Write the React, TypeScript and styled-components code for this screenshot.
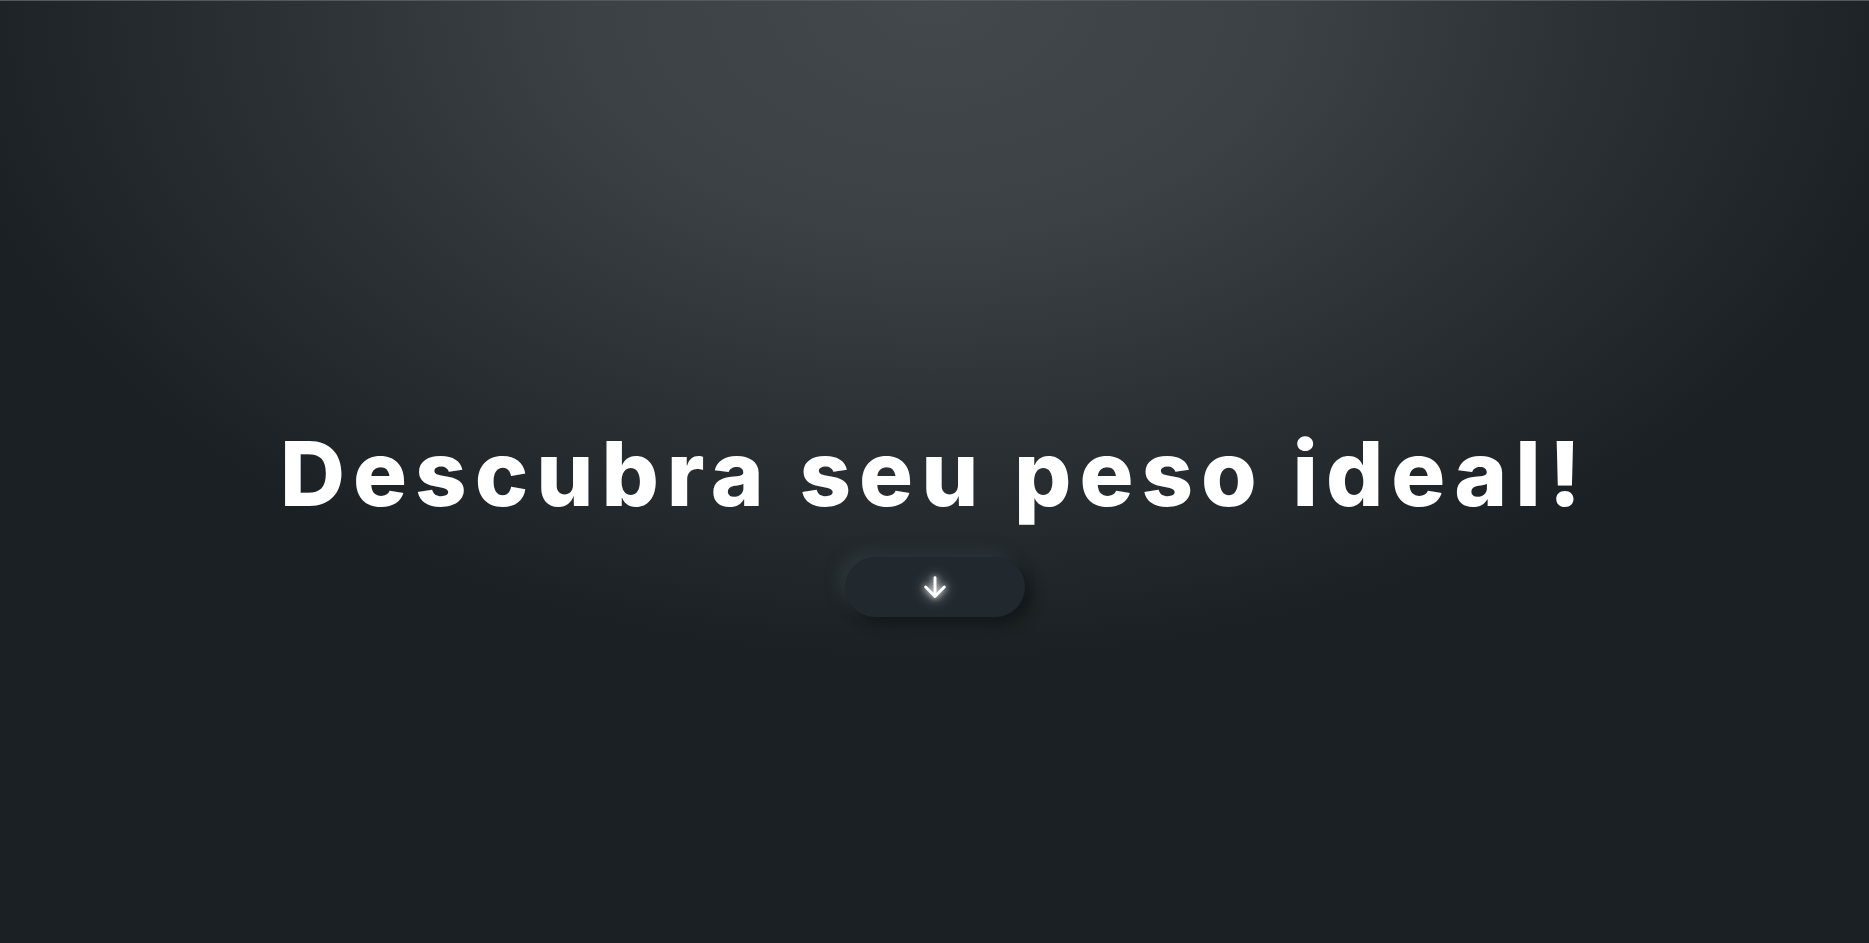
import React from "react";
import styled, { createGlobalStyle } from "styled-components";
import { ArrowDown } from "lucide-react";

const GlobalStyle = createGlobalStyle`
  * { box-sizing: border-box; }
  html, body { margin: 0; padding: 0; height: 100%; }
  body {
    background: #1a2023;
    font-family: "Inter", "Liberation Sans", sans-serif;
  }
`;

const Hero = styled.section`
  height: 100vh;
  border-top: 1px solid #55595d;
  background:
    radial-gradient(
      ellipse 1000px 660px at 50% 0%,
      #43484c 0%,
      #3c4145 35%,
      #2b3135 65%,
      #1a2023 100%
    ),
    #1a2023;
  display: flex;
  flex-direction: column;
  align-items: center;
  padding-top: 419px;
`;

const Title = styled.h1`
  margin: 0;
  color: #ffffff;
  font-size: 90px;
  font-weight: 800;
  line-height: 1.2;
  letter-spacing: 8px;
  text-align: center;
`;

const ScrollButton = styled.button`
  margin-top: 29px;
  width: 180px;
  height: 60px;
  border: none;
  border-radius: 30px;
  background: #22292e;
  box-shadow: 7px 7px 14px #13171a, -6px -6px 14px #2f363b;
  display: flex;
  align-items: center;
  justify-content: center;
  color: #ffffff;
  cursor: pointer;

  svg {
    filter: drop-shadow(0 0 3px rgba(255, 255, 255, 0.95))
      drop-shadow(0 0 7px rgba(255, 255, 255, 0.55));
  }
`;

export default function App() {
  return (
    <>
      <GlobalStyle />
      <Hero>
        <Title>Descubra seu peso ideal!</Title>
        <ScrollButton aria-label="Rolar para baixo">
          <ArrowDown size={32} strokeWidth={2.2} />
        </ScrollButton>
      </Hero>
    </>
  );
}
